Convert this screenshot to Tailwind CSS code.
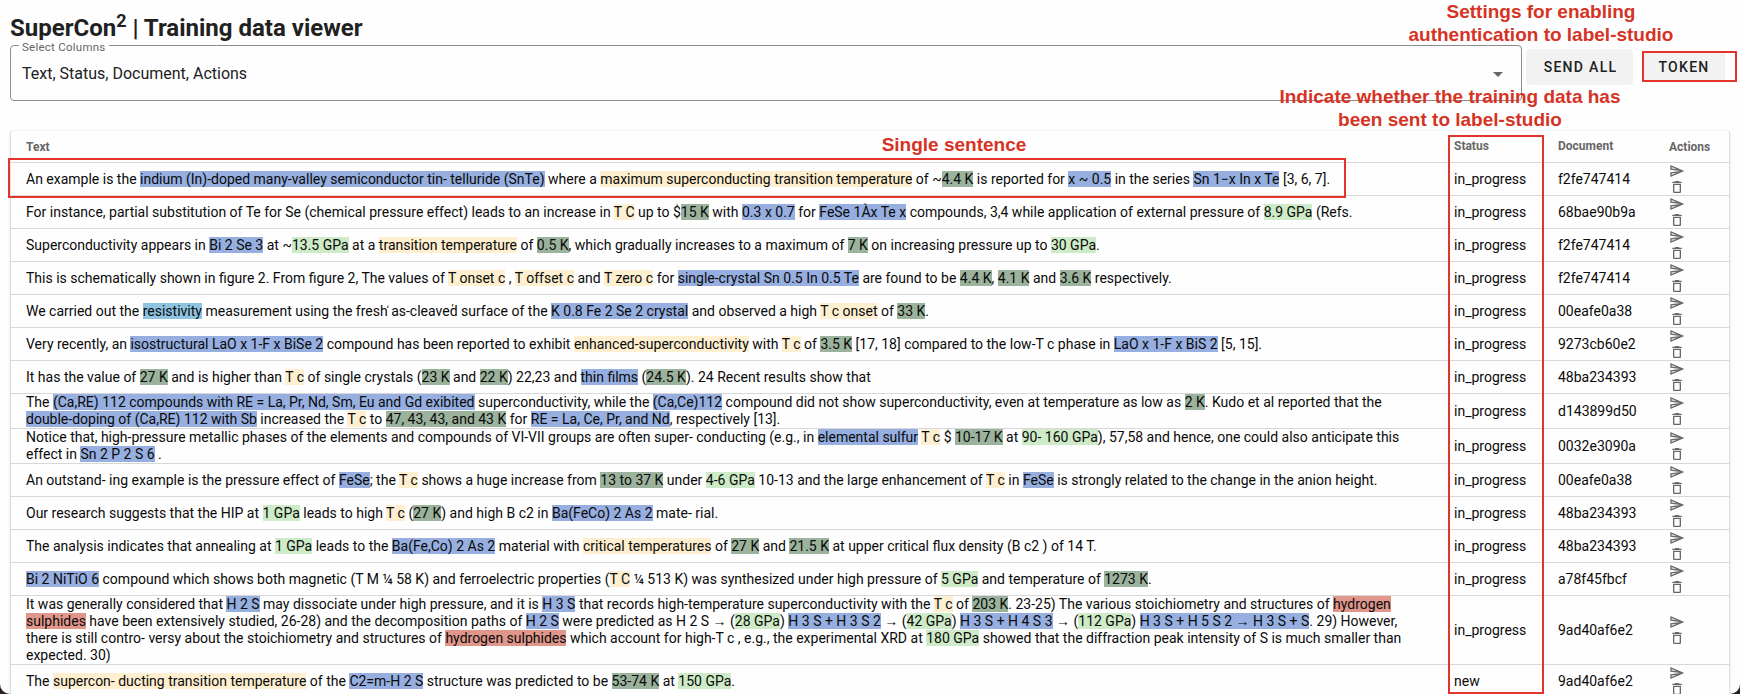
<!DOCTYPE html>
<html lang="en">
<head>
<meta charset="utf-8">
<title>SuperCon2 | Training data viewer</title>
<script src="https://cdn.jsdelivr.net/npm/@tailwindcss/browser@4"></script>
</head>
<body class="bg-[#2a2024]">
<div class="relative h-[694px] w-[1740px] overflow-hidden rounded-b-[10px] bg-[#fefefe] font-[Roboto,sans-serif] text-[#212121]">
  <header class="flex h-[45px] items-end pl-[10px]">
    <h1 class="text-[24px] leading-[34px] font-bold whitespace-nowrap"><span>SuperCon<sup class="top-[-9px] text-[18px]">2</sup> | Training data viewer</span></h1>
  </header>
  <div class="flex items-start">
    <div class="relative ml-[10px] h-[56px] w-[1512px] rounded-[4px] border border-[#8c8c8c] pt-[16px] pl-[11px]">
      <span class="absolute top-[-6px] left-[8px] bg-[#fefefe] px-[3px] text-[11.5px] leading-[14px] tracking-[0.25px] text-[#666]">Select Columns</span>
      <div class="text-[16px] leading-[24px]"><span>Text, Status, Document, Actions</span></div>
      <svg class="absolute top-[26px] right-[18px] h-[5px] w-[10px]" viewBox="0 0 10 5"><path d="M0 0h10L5 5z" fill="#666"/></svg>
    </div>
    <button class="mt-[4px] ml-[4px] h-[36px] w-[107px] rounded-[4px] bg-[#f2f2f2] pl-[2px] text-[14px] font-medium tracking-[1.3px]">SEND ALL</button>
    <button class="mt-[6px] ml-[10px] h-[30px] w-[82px] rounded-[3px] bg-[#f2f2f2] pt-[2px] text-[14px] font-medium tracking-[1.3px]">TOKEN</button>
  </div>
  <main class="mt-[29px] ml-[10px] w-[1720px] rounded-t-[4px] border border-[#dedede] border-t-[#f2f2f2] shadow-sm">
    <div class="flex h-[32px] items-center border-b border-[#d8d8d8] text-[12px] font-bold text-[#666]">
      <div class="w-[1443px] pl-[15px]">Text</div><div class="w-[104px] pb-[2px]">Status</div><div class="w-[111px] pb-[2px]">Document</div><div>Actions</div>
    </div>
    <div id="rows"></div>
  </main>

  <div class="absolute top-[158px] left-[8px] h-[40px] w-[1338px] border-2 border-[#e2342a]"></div>
  <div class="absolute top-[135px] left-[1448px] h-[559px] w-[96px] border-2 border-[#e2342a]"></div>
  <div class="absolute top-[51px] left-[1642px] h-[31px] w-[95px] border-2 border-[#e2342a]"></div>
  <div class="absolute top-[0px] left-[1341px] w-[400px] text-center font-['Liberation_Sans',sans-serif] text-[19px] leading-[23px] font-bold text-[#d63324]">Settings for enabling<br>authentication to label-studio</div>
  <div class="absolute top-[85px] left-[1250px] w-[400px] text-center font-['Liberation_Sans',sans-serif] text-[19px] leading-[23px] font-bold text-[#d63324]">Indicate whether the training data has<br>been sent to label-studio</div>
  <div class="absolute top-[133px] left-[854px] w-[200px] text-center font-['Liberation_Sans',sans-serif] text-[19px] leading-[23px] font-bold text-[#d63324]">Single sentence</div>
</div>
<script>
// Entity markup: {m material} {t tc expression} {k temperature} {p pressure} {e method} {c class}
const tones = {
  m: "bg-[#96afe0]",
  t: "bg-[#fdefcf]",
  k: "bg-[#9bb29c]",
  p: "bg-[#cdebc7]",
  e: "bg-[#8fc4e0]",
  c: "bg-[#e0968a]"
};
const rows = [
  [33, "An example is the {m indium (In)-doped many-valley semiconductor tin- telluride (SnTe)} where a {t maximum superconducting transition temperature} of ~{k 4.4 K} is reported for {m x ~ 0.5} in the series {m Sn 1−x In x Te} [3, 6, 7].", "in_progress", "f2fe747414"],
  [33, "For instance, partial substitution of Te for Se (chemical pressure effect) leads to an increase in {t T C} up to ${k 15 K} with {m 0.3 x 0.7} for {m FeSe 1Àx Te x} compounds, 3,4 while application of external pressure of {p 8.9 GPa} (Refs.", "in_progress", "68bae90b9a"],
  [33, "Superconductivity appears in {m Bi 2 Se 3} at ~{p 13.5 GPa} at a {t transition temperature} of {k 0.5 K}, which gradually increases to a maximum of {k 7 K} on increasing pressure up to {p 30 GPa}.", "in_progress", "f2fe747414"],
  [33, "This is schematically shown in figure 2. From figure 2, The values of {t T onset c} , {t T offset c} and {t T zero c} for {m single-crystal Sn 0.5 In 0.5 Te} are found to be {k 4.4 K}, {k 4.1 K} and {k 3.6 K} respectively.", "in_progress", "f2fe747414"],
  [33, "We carried out the {e resistivity} measurement using the fresh<i class='absolute -ml-px -mt-px text-[10px] not-italic'>‘</i> as-cleaved<i class='absolute -ml-[6px] -mt-[3px] text-[10px] not-italic'>’</i> surface of the {m K 0.8 Fe 2 Se 2 crystal} and observed a high {t T c onset} of {k 33 K}.", "in_progress", "00eafe0a38"],
  [33, "Very recently, an {m isostructural LaO x 1-F x BiSe 2} compound has been reported to exhibit {t enhanced-superconductivity} with {t T c} of {k 3.5 K} [17, 18] compared to the low-T c phase in {m LaO x 1-F x BiS 2} [5, 15].", "in_progress", "9273cb60e2"],
  [33, "It has the value of {k 27 K} and is higher than {t T c} of single crystals ({k 23 K} and {k 22 K}) 22,23 and {m thin films} ({k 24.5 K}). 24 Recent results show that", "in_progress", "48ba234393"],
  [35, "The {m (Ca,RE) 112 compounds with RE = La, Pr, Nd, Sm, Eu and Gd exibited} superconductivity, while the {m (Ca,Ce)112} compound did not show superconductivity, even at temperature as low as {k 2 K}. Kudo et al reported that the|{m double-doping of (Ca,RE) 112 with Sb} increased the {t T c} to {k 47, 43, 43, and 43 K} for {m RE = La, Ce, Pr, and Nd}, respectively [13].", "in_progress", "d143899d50"],
  [35, "Notice that, high-pressure metallic phases of the elements and compounds of VI-VII groups are often super- conducting (e.g., in {m elemental sulfur} {t T c} $ {k 10-17 K} at {p 90- 160 GPa}), 57,58 and hence, one could also anticipate this|effect in {m Sn 2 P 2 S 6} .", "in_progress", "0032e3090a"],
  [33, "An outstand- ing example is the pressure effect of {m FeSe}; the {t T c} shows a huge increase from {k 13 to 37 K} under {p 4-6 GPa} 10-13 and the large enhancement of {t T c} in {m FeSe} is strongly related to the change in the anion height.", "in_progress", "00eafe0a38"],
  [33, "Our research suggests that the HIP at {p 1 GPa} leads to high {t T c} ({k 27 K}) and high B c2 in {m Ba(FeCo) 2 As 2} mate- rial.", "in_progress", "48ba234393"],
  [33, "The analysis indicates that annealing at {p 1 GPa} leads to the {m Ba(Fe,Co) 2 As 2} material with {t critical temperatures} of {k 27 K} and {k 21.5 K} at upper critical flux density (B c2 ) of 14 T.", "in_progress", "48ba234393"],
  [33, "{m Bi 2 NiTiO 6} compound which shows both magnetic (T M ¼ 58 K) and ferroelectric properties ({t T C} ¼ 513 K) was synthesized under high pressure of {p 5 GPa} and temperature of {k 1273 K}.", "in_progress", "a78f45fbcf"],
  [69, "It was generally considered that {m H 2 S} may dissociate under high pressure, and it is {m H 3 S} that records high-temperature superconductivity with the {t T c} of {k 203 K}. 23-25) The various stoichiometry and structures of {c hydrogen}|{c sulphides} have been extensively studied, 26-28) and the decomposition paths of {m H 2 S} were predicted as H 2 S → ({p 28 GPa}) {m H 3 S + H 3 S 2} → ({p 42 GPa}) {m H 3 S + H 4 S 3} → ({p 112 GPa}) {m H 3 S + H 5 S 2 → H 3 S + S}. 29) However,|there is still contro- versy about the stoichiometry and structures of {c hydrogen sulphides} which account for high-T c , e.g., the experimental XRD at {p 180 GPa} showed that the diffraction peak intensity of S is much smaller than|expected. 30)", "in_progress", "9ad40af6e2"],
  [33, "The {t supercon- ducting transition temperature} of the {m C2=m-H 2 S} structure was predicted to be {k 53-74 K} at {p 150 GPa}.", "new", "9ad40af6e2"]
];
const icons = `<svg class="h-[16px] w-[16px]" viewBox="0 0 24 24" fill="#686868"><path d="M4.01 6.03l7.51 3.22-7.52-1 .01-2.22m7.5 8.72L4 17.97v-2.22l7.51-1M2.01 3L2 10l15 2-15 2 .01 7L23 12 2.01 3z"/></svg><svg class="h-[16px] w-[16px]" viewBox="0 0 24 24" fill="#686868"><path d="M6 19c0 1.1.9 2 2 2h8c1.1 0 2-.9 2-2V7H6v12zM8 9h8v10H8V9zm7.500-5l-1-1h-5l-1 1H5v2h14V4z"/></svg>`;
const mark = s => s.replace(/\{(\w) ([^}]*)\}/g, (_, k, t) => `<span class="${tones[k]}">${t}</span>`);
document.getElementById("rows").innerHTML = rows.map(([h, text, status, doc]) => `
  <div class="flex items-center border-b border-[#d8d8d8] text-[14px] text-[#0a0a0a]" style="height:${h}px">
    <div class="w-[1443px] pl-[15px] leading-[17px] whitespace-nowrap">${text.split("|").map(l => `<div class="h-[17px]">${mark(l)}</div>`).join("")}</div>
    <div class="w-[104px]">${status}</div>
    <div class="w-[111px]">${doc}</div>
    <div class="flex flex-col">${icons}</div>
  </div>`).join("");
</script>
</body>
</html>
